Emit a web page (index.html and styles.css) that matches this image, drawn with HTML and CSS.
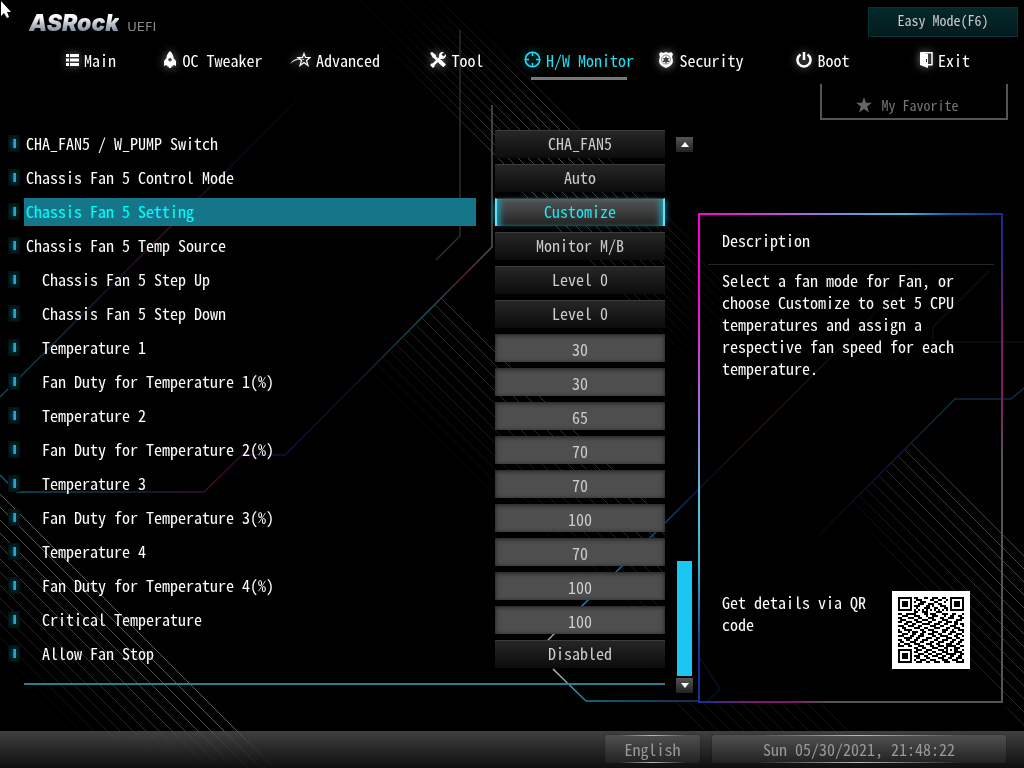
FILE: index.html
```html
<!DOCTYPE html>
<html lang="en">
<head>
  <meta charset="UTF-8">
  <title>ASRock UEFI | H/W Monitor</title>
  <meta name="viewport" content="width=device-width, initial-scale=1.0">
  <link rel="stylesheet" href="styles.css">
</head>
<body>
  <!-- BACKGROUND ART -->
  <svg class="backdrop" viewBox="0 0 1024 768" preserveAspectRatio="xMidYMid slice" aria-hidden="true">
    <defs>
      <pattern id="hatch" width="10" height="10" patternUnits="userSpaceOnUse">
        <path d="M-1 -1L11 11M9 -1L11 1M-1 9L1 11" stroke="#777" stroke-width="1" />
      </pattern>
      <pattern id="hatchWide" width="13" height="13" patternUnits="userSpaceOnUse">
        <path d="M-1 -1L14 14M12 -1L14 1M-1 12L1 14" stroke="#888" stroke-width="1" />
      </pattern>
      <linearGradient id="fadeTop" gradientUnits="userSpaceOnUse" x1="400" y1="30" x2="720" y2="350">
        <stop offset="0" stop-color="#fff" stop-opacity="0.05" />
        <stop offset="0.2" stop-color="#fff" stop-opacity="0.25" />
        <stop offset="0.45" stop-color="#fff" stop-opacity="0.7" />
        <stop offset="0.7" stop-color="#fff" stop-opacity="0.3" />
        <stop offset="1" stop-color="#fff" stop-opacity="0" />
      </linearGradient>
      <linearGradient id="fadeMid" gradientUnits="userSpaceOnUse" x1="360" y1="380" x2="445" y2="295">
        <stop offset="0" stop-color="#fff" stop-opacity="0" />
        <stop offset="1" stop-color="#fff" stop-opacity="0.4" />
      </linearGradient>
      <linearGradient id="fadeLeft" gradientUnits="userSpaceOnUse" x1="20" y1="690" x2="110" y2="600">
        <stop offset="0" stop-color="#fff" stop-opacity="0" />
        <stop offset="1" stop-color="#fff" stop-opacity="0.7" />
      </linearGradient>
      <linearGradient id="fadeRight" gradientUnits="userSpaceOnUse" x1="860" y1="560" x2="970" y2="500">
        <stop offset="0" stop-color="#fff" stop-opacity="0" />
        <stop offset="1" stop-color="#fff" stop-opacity="0.5" />
      </linearGradient>
      <mask id="maskTop"><rect width="1024" height="768" fill="url(#fadeTop)" /></mask>
      <mask id="maskMid"><rect width="1024" height="768" fill="url(#fadeMid)" /></mask>
      <mask id="maskLeft"><rect width="1024" height="768" fill="url(#fadeLeft)" /></mask>
      <mask id="maskRight"><rect width="1024" height="768" fill="url(#fadeRight)" /></mask>
      <linearGradient id="traceLong" gradientUnits="userSpaceOnUse" x1="0" y1="480" x2="492" y2="250">
        <stop offset="0" stop-color="#0b5a70" />
        <stop offset="0.2" stop-color="#102a44" />
        <stop offset="0.35" stop-color="#45092a" />
        <stop offset="0.5" stop-color="#10103a" />
        <stop offset="0.65" stop-color="#0a0f1c" />
        <stop offset="0.85" stop-color="#1d4f63" />
        <stop offset="0.93" stop-color="#5a1830" />
        <stop offset="1" stop-color="#555" />
      </linearGradient>
      <linearGradient id="traceLeft" gradientUnits="userSpaceOnUse" x1="0" y1="397" x2="330" y2="67">
        <stop offset="0" stop-color="#0b4a5c" />
        <stop offset="0.35" stop-color="#11112c" />
        <stop offset="0.52" stop-color="#480d28" />
        <stop offset="0.68" stop-color="#0e0e20" />
        <stop offset="1" stop-color="#000" />
      </linearGradient>
      <linearGradient id="traceMid" gradientUnits="userSpaceOnUse" x1="548" y1="640" x2="934" y2="254">
        <stop offset="0" stop-color="#aaa" />
        <stop offset="0.08" stop-color="#1a86b8" />
        <stop offset="0.3" stop-color="#13447c" />
        <stop offset="0.42" stop-color="#0a0a20" />
        <stop offset="0.55" stop-color="#2c0a1e" />
        <stop offset="0.75" stop-color="#0c0c1a" />
        <stop offset="1" stop-color="#000" />
      </linearGradient>
      <linearGradient id="traceBase" gradientUnits="userSpaceOnUse" x1="553" y1="669" x2="720" y2="701">
        <stop offset="0" stop-color="#bbb" />
        <stop offset="0.2" stop-color="#1d7fa0" />
        <stop offset="1" stop-color="#10306a" />
      </linearGradient>
      <linearGradient id="traceRight" gradientUnits="userSpaceOnUse" x1="800" y1="555" x2="955" y2="399">
        <stop offset="0" stop-color="#000" />
        <stop offset="0.5" stop-color="#101030" />
        <stop offset="1" stop-color="#0d2f3e" />
      </linearGradient>
    </defs>
    <polygon points="340,0 450,0 580,130 800,350 800,480 700,380" fill="url(#hatch)" mask="url(#maskTop)" />
    <polygon points="445,295 665,515 665,640 360,380" fill="url(#hatchWide)" mask="url(#maskMid)" />
    <polygon points="0,485 283,768 110,768 0,658" fill="url(#hatchWide)" mask="url(#maskLeft)" />
    <polygon points="915,440 1024,549 1024,730 850,505" fill="url(#hatchWide)" mask="url(#maskRight)" />
    <polygon points="672,702 820,702 886,768 738,768" fill="url(#hatchWide)" opacity="0.15" />
    <g fill="none" stroke-width="1.5">
      <path d="M0 475L17 492H204L242 455H285L492 247V105" stroke="url(#traceLong)" />
      <path d="M460 30V236L436 260" stroke="#2c2c2c" />
      <path d="M0 397L330 67" stroke="url(#traceLeft)" />
      <path d="M548 640L934 254" stroke="url(#traceMid)" />
      <path d="M553 669L586 701H700" stroke="url(#traceBase)" />
      <path d="M800 554L955 399H1011L1024 388" stroke="url(#traceRight)" />
      <path d="M990 270L933 327V342H1024" stroke="#061212" />
      <path d="M700 658L720 689L708 701" stroke="#0a0e24" />
    </g>
  </svg>

  <!-- HEADER -->
  <header class="topbar">
    <div class="logo"><span class="brand">ASRock</span><span class="uefi">UEFI</span></div>
    <button class="easy-mode" type="button">Easy Mode(F6)</button>
  </header>

  <nav class="tabs">
    <a href="#main">
      <svg width="13" height="12" viewBox="0 0 13 12"><path fill="#fff" d="M0 0h3v3H0zM4 0h9v3H4zM0 4.500h3v3H0zM4 4.500h9v3H4zM0 9h3v3H0zM4 9h9v3H4z" /></svg>Main
    </a>
    <a href="#oc">
      <svg width="14" height="17" viewBox="0 0 14 17"><path fill="#fff" fill-rule="evenodd" d="M7 0C9 2 10.500 4 10.500 7l2.500 3v5l-2.500-1L9.500 15.500h-1L8 17H6l-.5-1.500h-1L3.500 14 1 15v-5l2.500-3C3.500 4 5 2 7 0zM7 7a1.700 1.700 0 1 0 .01 0z" /></svg>OC Tweaker
    </a>
    <a href="#advanced">
      <svg width="21" height="15" viewBox="0 0 21 15"><path fill="none" stroke="#fff" stroke-width="1.200" d="M14 1.500l1.500 4h4.500l-3.500 3 1.500 5-4-3-4 3 1.500-5-3.500-3h4.500z" /><path fill="#ddd" d="M0 12C3 7 8 5.500 14 7v1C9 6.500 4 8.500 0 12z" /></svg>Advanced
    </a>
    <a href="#tool">
      <svg width="16" height="16" viewBox="0 0 16 16"><path stroke="#fff" stroke-width="2.500" fill="none" d="M2 14L11 5M4.500 5L14 14" /><path fill="#fff" d="M0 1l2-1 4 3-.5 2.500L3 6zM9 9l2-1.500 5 5L13.500 15 9 11zM9 4c0-3 2-4.500 5-4l-2.500 2.500 2 2L16 2c.5 3-1.500 5-4.500 5L9 6.500zM0 13l2-2 3 3-2 2z" /></svg>Tool
    </a>
    <a href="#monitor" class="active">
      <svg width="17" height="17" viewBox="0 0 17 17"><circle cx="8.500" cy="8.500" r="7.200" fill="none" stroke="#20e0f4" stroke-width="1.600" /><path stroke="#20e0f4" stroke-width="1.500" d="M8.500 1v4M8.500 12v4M1 8.500h4M12 8.500h4" /></svg>H/W Monitor
    </a>
    <a href="#security">
      <svg width="16" height="16" viewBox="0 0 16 16"><path fill="#fff" d="M1 2l2-2 2 1 3-1 3 1 2-1 2 2-1 3c2 5 1 8-6 11C1 13 0 10 2 5z" /><circle cx="8" cy="7.500" r="4.500" fill="none" stroke="#888" /><path fill="#444" d="M8 4l1 2h2.500L10 7.500 11.500 10H9l-1 2-1-2H4.500L6 7.500 4.500 6H7z" /></svg>Security
    </a>
    <a href="#boot">
      <svg width="16" height="16" viewBox="0 0 16 16"><path fill="none" stroke="#fff" stroke-width="2.500" d="M4.500 2.500a6.500 6.500 0 1 0 7 0M8 0v8" /></svg>Boot
    </a>
    <a href="#exit">
      <svg width="13" height="16" viewBox="0 0 13 16"><path fill="none" stroke="#fff" stroke-width="1.500" d="M1 .8h11v12H7" /><path fill="#fff" d="M0 0l8 2v14l-8-3z" /><path stroke="#333" d="M6.500 7v3" /></svg>Exit
    </a>
  </nav>

  <div class="favorite-row">
    <button class="favorite" type="button">
      <svg width="16" height="16" viewBox="0 0 16 16"><path fill="#666" d="M8 0l2 5.800h6l-4.800 3.700L13 15.500 8 12l-5 3.500 1.800-6L0 5.800h6z" /></svg>My Favorite
    </button>
  </div>

  <!-- SETTINGS -->
  <main class="content">
    <form class="settings">
      <div class="row"><label for="sw">CHA_FAN5 / W_PUMP Switch</label><select id="sw"><option>CHA_FAN5</option></select></div>
      <div class="row"><label for="mode">Chassis Fan 5 Control Mode</label><select id="mode"><option>Auto</option></select></div>
      <div class="row selected"><label for="setting">Chassis Fan 5 Setting</label><select id="setting"><option>Customize</option></select></div>
      <div class="row"><label for="source">Chassis Fan 5 Temp Source</label><select id="source"><option>Monitor M/B</option></select></div>
      <div class="row sub"><label for="up">Chassis Fan 5 Step Up</label><select id="up"><option>Level 0</option></select></div>
      <div class="row sub"><label for="down">Chassis Fan 5 Step Down</label><select id="down"><option>Level 0</option></select></div>
      <div class="row sub"><label for="t1">Temperature 1</label><input type="text" id="t1" value="30"></div>
      <div class="row sub"><label for="d1">Fan Duty for Temperature 1(%)</label><input type="text" id="d1" value="30"></div>
      <div class="row sub"><label for="t2">Temperature 2</label><input type="text" id="t2" value="65"></div>
      <div class="row sub"><label for="d2">Fan Duty for Temperature 2(%)</label><input type="text" id="d2" value="70"></div>
      <div class="row sub"><label for="t3">Temperature 3</label><input type="text" id="t3" value="70"></div>
      <div class="row sub"><label for="d3">Fan Duty for Temperature 3(%)</label><input type="text" id="d3" value="100"></div>
      <div class="row sub"><label for="t4">Temperature 4</label><input type="text" id="t4" value="70"></div>
      <div class="row sub"><label for="d4">Fan Duty for Temperature 4(%)</label><input type="text" id="d4" value="100"></div>
      <div class="row sub"><label for="crit">Critical Temperature</label><input type="text" id="crit" value="100"></div>
      <div class="row sub"><label for="stop">Allow Fan Stop</label><select id="stop"><option>Disabled</option></select></div>
    </form>

    <div class="scrollbar">
      <button type="button" aria-label="Scroll up"><svg width="8" height="5" viewBox="0 0 8 5"><path fill="#fff" d="M0 5l4-5 4 5z" /></svg></button>
      <div class="track"><div class="thumb"></div></div>
      <button type="button" aria-label="Scroll down"><svg width="8" height="5" viewBox="0 0 8 5"><path fill="#fff" d="M0 0l4 5 4-5z" /></svg></button>
    </div>

    <aside class="description">
      <h2>Description</h2>
      <p>Select a fan mode for Fan, or choose Customize to set 5 CPU temperatures and assign a respective fan speed for each temperature.</p>
      <div class="details">
        <p>Get details via QR code</p>
        <svg class="qr" viewBox="-3 -3 39 39" role="img" aria-label="QR code"><path id="qrPath" /></svg>
      </div>
    </aside>
  </main>

  <footer class="statusbar">
    <button type="button" class="language">English</button>
    <div class="clock">Sun 05/30/2021, 21:48:22</div>
  </footer>

  <svg class="cursor" width="12" height="19" viewBox="0 0 12 19" aria-hidden="true"><path fill="#fff" d="M1 1v15l3-3 3 5 2-1-2-5h4z" /></svg>

  <script src="script.js"></script>
</body>
</html>
```
FILE: styles.css
```css
* {
  box-sizing: border-box;
}
body {
  margin: 0;
  min-height: 100vh;
  display: flex;
  flex-direction: column;
  background: #000;
  color: #fff;
  font-family: "Noto Sans CJK JP", "Liberation Mono", monospace;
  font-size: 16px;
  line-height: 22px;
  font-feature-settings: "hwid";
}
button, input, select {
  font: inherit;
  font-feature-settings: inherit;
  color: inherit;
  margin: 0;
  padding: 0;
  border: none;
  border-radius: 0;
  background: none;
}
.backdrop {
  position: fixed;
  inset: 0;
  width: 100%;
  height: 100%;
  z-index: -1;
}
.cursor {
  position: absolute;
  top: 0;
  left: 0;
}

/* header */
.topbar {
  display: flex;
  justify-content: space-between;
  align-items: flex-start;
  padding: 7px 6px 0 29px;
}
.logo {
  display: flex;
  align-items: baseline;
  gap: 8px;
  padding-top: 4px;
}
.brand {
  font: italic 900 23px/24px Inter, sans-serif;
  background: linear-gradient(#fff 25%, #b9c0cc 55%, #8b95a6 80%);
  -webkit-background-clip: text;
  background-clip: text;
  color: transparent;
}
.uefi {
  font: 13px/24px "DejaVu Sans", sans-serif;
  color: #888;
}
.easy-mode {
  width: 150px;
  height: 30px;
  padding-bottom: 4px;
  font-size: 14px;
  color: #ccc;
  background: linear-gradient(#04292b, #031a1c);
  border: 1px solid #063436;
}

/* tabs */
.tabs {
  display: grid;
  grid-template-columns: repeat(8, 1fr);
  padding: 7px 18px 0 30px;
}
.tabs a {
  display: flex;
  justify-content: center;
  align-items: center;
  gap: 5px;
  height: 34px;
  padding-bottom: 7px;
  color: #fff;
  text-decoration: none;
  white-space: nowrap;
}
.tabs svg {
  filter: drop-shadow(0 0 4px rgba(255, 255, 255, 0.5));
}
.tabs .active {
  color: #20e0f4;
  background: linear-gradient(#777, #777) center bottom / 96px 3px no-repeat;
}
.tabs .active svg {
  filter: drop-shadow(0 0 4px rgba(32, 224, 244, 0.5));
}
.favorite-row {
  display: flex;
  justify-content: flex-end;
  padding: 4px 16px 0 0;
}
.favorite {
  display: flex;
  justify-content: center;
  align-items: center;
  gap: 10px;
  width: 188px;
  height: 36px;
  padding: 8px 14px 0 0;
  font-size: 14px;
  color: #777;
  border: 2px solid #555;
  border-top: none;
}

/* settings list */
.content {
  flex: 1;
  display: flex;
  align-items: flex-start;
  padding: 7px 21px 0 0;
}
.settings {
  flex: 1;
  padding-bottom: 14px;
  background: linear-gradient(#2b7d93, #2b7d93) 24px bottom / calc(100% - 24px) 2px no-repeat;
}
.row {
  display: grid;
  grid-template-columns: 1fr 170px;
  align-items: center;
  gap: 19px;
  height: 34px;
  padding-left: 8px;
}
.row label {
  display: flex;
  align-items: center;
  gap: 6px;
  height: 28px;
  padding-bottom: 2px;
  white-space: pre;
}
.row label::before {
  content: "";
  width: 12px;
  height: 17px;
  background:
    linear-gradient(90deg, #666 1px, #26a4d0 1px) center / 3px 9px no-repeat,
    radial-gradient(#053840, #001214 75%);
}
.sub label {
  gap: 22px;
}
.selected label {
  color: #0ff;
  background: linear-gradient(#15768a, #15768a) 16px 0 no-repeat;
}
.row select {
  appearance: none;
  height: 28px;
  padding-bottom: 3px;
  text-align: center;
  text-align-last: center;
  color: #ccc;
  background: linear-gradient(#262626, #0c0c0c);
  border-top: 1px solid #3c3c3c;
}
.row input {
  width: 100%;
  height: 28px;
  padding-top: 2px;
  text-align: center;
  color: #ccc;
  background: #4e4e4e;
  box-shadow: inset 0 1px 5px #1c1c1c;
}
.row.selected select {
  color: #20e8f4;
  background: linear-gradient(#555, #222);
  border-left: 2px solid #5ce1ff;
  border-right: 2px solid #5ce1ff;
  box-shadow: -4px 0 6px -3px #0b6f80, 4px 0 6px -3px #0b6f80, inset 6px 0 6px -3px #2798aa, inset -6px 0 6px -3px #2798aa;
}

/* scrollbar */
.scrollbar {
  display: flex;
  flex-direction: column;
  width: 17px;
  height: 556px;
  margin: 10px 5px 0 11px;
}
.scrollbar button {
  display: flex;
  justify-content: center;
  align-items: center;
  height: 15px;
  background: linear-gradient(#555, #222);
}
.track {
  flex: 1;
  display: flex;
  flex-direction: column;
  justify-content: flex-end;
  padding: 1px 1px 2px;
}
.thumb {
  height: 115px;
  background: #1ac6f2;
}

/* description */
.description {
  display: flex;
  flex-direction: column;
  width: 305px;
  height: 490px;
  margin-top: 86px;
  padding: 2px 33px 34px 24px;
  background:
    linear-gradient(90deg, #ff00d4, #a868d8 35%, #3cc0d0 68%, #0a64b0 82%, #122c8c) top / 100% 2px no-repeat,
    linear-gradient(90deg, #1a2ca0, #7c1a64 18%, #7c1a64 32%, #555 42%) bottom / 100% 2px no-repeat,
    linear-gradient(#ff00d4 15%, #a868d8 38%, #55c4d8 60%, #30b0d0 72%, #123098 90%) left / 2px 100% no-repeat,
    linear-gradient(#122c8c, #7c1a64 25%, #7c1a64 38%, #555 50%) right / 2px 100% no-repeat;
}
.description h2 {
  margin: 0 -24px 4px -14px;
  padding: 14px 0 13px 14px;
  font-size: 16px;
  font-weight: normal;
  border-bottom: 1px solid #262626;
}
.description p {
  margin: 0;
}
.details {
  display: flex;
  justify-content: space-between;
  align-items: flex-start;
  margin-top: auto;
}
.details p {
  width: 150px;
}
.qr {
  width: 78px;
  height: 78px;
  background: #fff;
  shape-rendering: crispEdges;
}

/* status bar */
.statusbar {
  display: flex;
  justify-content: flex-end;
  gap: 12px;
  height: 37px;
  padding: 4px 18px 5px 0;
  color: #999;
  background: linear-gradient(rgba(80, 80, 80, 0.8), rgba(16, 16, 16, 0.9));
}
.language, .clock {
  display: flex;
  justify-content: center;
  align-items: center;
  width: 95px;
  background:
    linear-gradient(90deg, transparent 15%, #bbb, transparent 85%) top / 100% 1px no-repeat,
    linear-gradient(90deg, transparent 15%, #bbb, transparent 85%) bottom / 100% 1px no-repeat,
    linear-gradient(#505050, #222);
  border-radius: 2px;
  box-shadow: 0 0 1px #000;
}
.clock {
  width: 294px;
}
```
FILE: script.js
```js
// QR modules, one string per row
const qrRows = [
  "111111101100011001110011001111111",
  "100000100111000011001100101000001",
  "101110101001110000110001001011101",
  "101110100011100111001100001011101",
  "101110101110001101000111001011101",
  "100000100100011100110001101000001",
  "111111101010101010101010101111111",
  "000000001100111000011100000000000",
  "110011111000011011100011100110001",
  "001110001110001001110001001100110",
  "110001110011000111000110011100011",
  "011100001100111001100011100001110",
  "110011100111000110001100111011000",
  "000110011000111100111001100011011",
  "111001110011000011100110001110001",
  "001100001110011000111000110011100",
  "100111100001100111000011100100111",
  "110001011100110001110011001110001",
  "001110011001100111001100011001110",
  "111000110011100001100111100011001",
  "000111100110001110011000111001100",
  "110011001100111000110011100110011",
  "011000111001100011001110001100110",
  "100111001110001110011000111001100",
  "111001100011100011001110111110011",
  "000000001100110001110001100011100",
  "111111100111001110001110101011001",
  "100000101100011001100011100011110",
  "101110100011100110011100111110011",
  "101110101110011001110011001100110",
  "101110100110001100001110011001110",
  "100000101001110011100011100111001",
  "111111100111001100111001110001111"
];

let d = "";
qrRows.forEach((row, y) => {
  [...row].forEach((cell, x) => {
    if (cell === "1") d += `M${x} ${y}h1v1h-1z`;
  });
});
document.getElementById("qrPath").setAttribute("d", d);
```
